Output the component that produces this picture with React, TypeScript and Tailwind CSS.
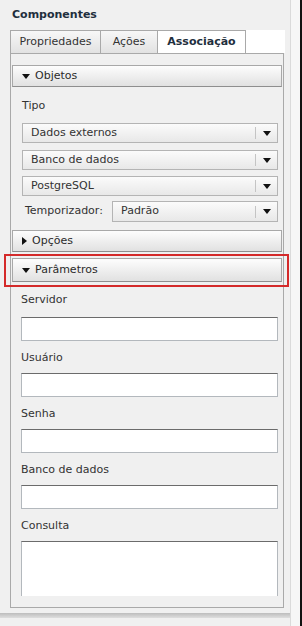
const font = { fontFamily: '"DejaVu Sans", Tahoma, sans-serif' };

const Caret = ({ dir = "down" }: { dir?: "down" | "right" }) =>
  dir === "down" ? (
    <svg width="8" height="5" viewBox="0 0 8 5" className="shrink-0">
      <path d="M0 0H8L4 5Z" fill="#111" />
    </svg>
  ) : (
    <svg width="5" height="8" viewBox="0 0 5 8" className="shrink-0">
      <path d="M0 0V8L5 4Z" fill="#111" />
    </svg>
  );

const SectionHeader = ({
  title,
  open = true,
  className = "",
}: {
  title: string;
  open?: boolean;
  className?: string;
}) => (
  <div
    className={`mx-[1px] h-[22px] flex items-center gap-[5px] pl-[9px] border border-[#a8a8a8] border-b-[#8e8e8e] bg-gradient-to-b from-[#fdfdfd] to-[#e1e1e1] text-[11px] text-[#2b2b2b] ${className}`}
  >
    <Caret dir={open ? "down" : "right"} />
    <span>{title}</span>
  </div>
);

const Dropdown = ({ value, className = "" }: { value: string; className?: string }) => (
  <div
    className={`h-[20px] flex items-center border border-[#b4b4b4] bg-gradient-to-b from-[#fbfbfb] to-[#e8e8e8] text-[11px] text-[#333] ${className}`}
  >
    <span className="flex-1 pl-[8px]">{value}</span>
    <div className="w-px h-[12px] bg-[#c4c4c4]" />
    <div className="w-[21px] flex justify-center">
      <Caret />
    </div>
  </div>
);

const Field = ({ label, first = false }: { label: string; first?: boolean }) => (
  <>
    <div className={`${first ? "h-[35px]" : "h-[32px]"} flex items-center pl-[10px] pt-[2px] text-[11px] text-[#333]`}>
      {label}
    </div>
    <div className="ml-[10px] w-[257px] h-[24px] shrink-0 bg-white border border-[#b3b8bd] border-t-[#6b6b6b]" />
  </>
);

export default function App() {
  return (
    <div className="w-[302px] h-[626px] flex bg-[#f0f0f0] overflow-hidden" style={font}>
      <div className="w-[290px] flex flex-col">
        <div className="h-[30px] flex items-center pl-[12px] text-[11px] font-bold text-[#1f2f3d]">
          Componentes
        </div>

        {/* Tabs */}
        <div className="h-[23px] flex pl-[10px] text-[11px]">
          <div className="w-[91px] flex items-center justify-center border border-b-0 border-[#a9a9a9] bg-gradient-to-b from-[#f7f7f7] to-[#e2e2e2] text-[#333]">
            Propriedades
          </div>
          <div className="w-[57px] flex items-center justify-center border border-l-0 border-b-0 border-[#a9a9a9] bg-gradient-to-b from-[#f7f7f7] to-[#e2e2e2] text-[#333]">
            Ações
          </div>
          <div className="w-[88px] flex items-center justify-center border border-l-0 border-b-0 border-[#a9a9a9] bg-white font-bold text-[#1f2f3d]">
            Associação
          </div>
          <div className="w-[39px] bg-white" />
        </div>

        {/* Content box */}
        <div className="ml-[10px] w-[274px] h-[555px] flex flex-col border border-[#a9a9a9] bg-[#f0f0f0]">
          <div className="h-[11px] shrink-0" />
          <SectionHeader title="Objetos" />
          <div className="h-[36px] flex items-center pl-[11px] pt-[2px] text-[11px] text-[#333]">Tipo</div>
          <Dropdown value="Dados externos" className="ml-[11px] w-[256px]" />
          <Dropdown value="Banco de dados" className="ml-[11px] w-[256px] mt-[7px]" />
          <Dropdown value="PostgreSQL" className="ml-[11px] w-[256px] mt-[6px]" />
          <div className="flex items-center mt-[5px]">
            <span className="w-[101px] pl-[14px] text-[11px] text-[#333]">Temporizador:</span>
            <Dropdown value="Padrão" className="w-[166px] h-[21px]" />
          </div>
          <SectionHeader title="Opções" open={false} className="mt-[8px]" />
          <div className="relative mt-[6px]">
            <SectionHeader title="Parâmetros" className="h-[24px]" />
            <div className="absolute -top-[4px] -bottom-[5px] -left-[7px] -right-[6px] border-2 border-[#d42a2a]" />
          </div>
          <Field label="Servidor" first />
          <Field label="Usuário" />
          <Field label="Senha" />
          <Field label="Banco de dados" />
          <div className="h-[32px] flex items-center pl-[10px] pt-[2px] text-[11px] text-[#333]">Consulta</div>
          <div className="ml-[10px] w-[257px] h-[55px] overflow-hidden shrink-0">
            <div className="h-[80px] bg-white border border-[#b3b8bd] border-t-[#6b6b6b]" />
          </div>
        </div>
        <div className="h-[5px]" />
        <div className="h-[5px] bg-gradient-to-b from-[#bdbdbd] to-[#dedede]" />
      </div>
      <div className="w-[10px] border-l border-[#dadada] bg-[#f6f6f6]" />
      <div className="w-[2px] bg-[#111]" />
    </div>
  );
}
